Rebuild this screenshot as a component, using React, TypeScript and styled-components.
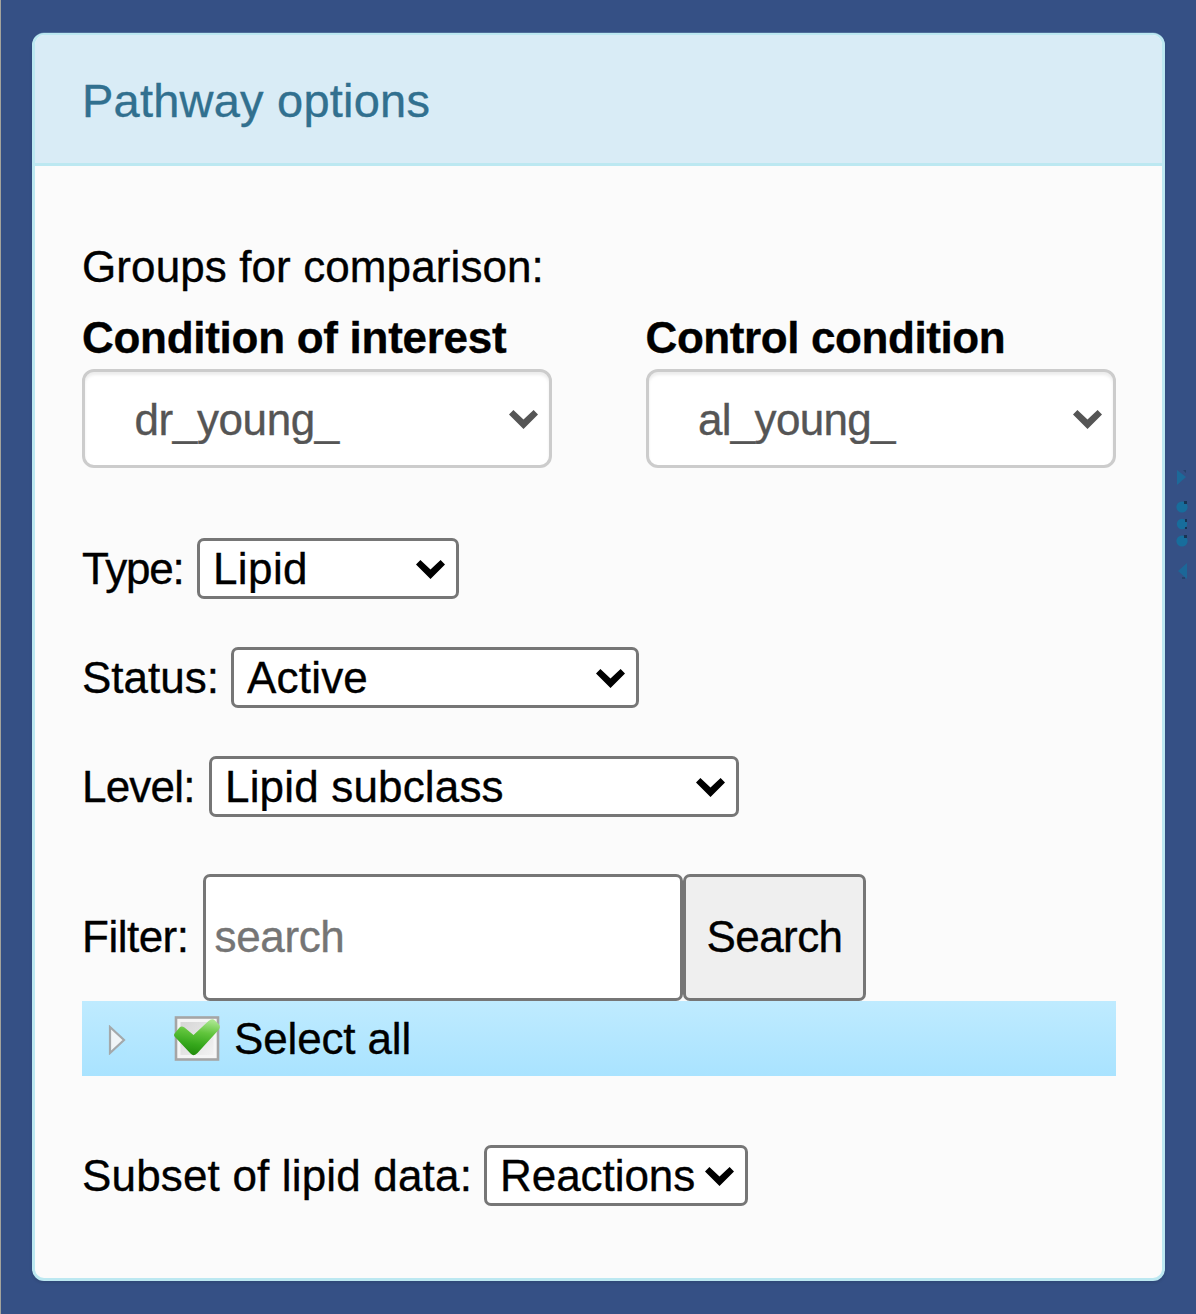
import React from "react";
import styled, { createGlobalStyle } from "styled-components";

const GlobalStyle = createGlobalStyle`
  *, *::before, *::after { box-sizing: border-box; }
  body { margin: 0; background: #355085; }
  body, select, input, button {
    font-family: "Liberation Sans", Arial, Helvetica, sans-serif;
    font-size: 44px;
    color: #000;
    -webkit-text-stroke-width: 0.35px;
  }
`;

const Page = styled.div`
  display: flex;
  align-items: flex-start;
  width: 1196px;
  height: 1314px;
  padding: 33px 0 0 31px;
  border-left: 1px solid #a3a39c;
  background: #355085;
  overflow: hidden;
`;

const Panel = styled.section`
  flex: none;
  width: 1133px;
  height: 1248px;
  border: 3px solid #bce8f1;
  border-top-width: 2px;
  border-radius: 12px;
  background: #fbfbfb;
  box-shadow: 0 2px 3px rgba(0, 0, 0, 0.1), 0 -1px 0 -0.5px rgba(188, 232, 241, 0.4);
  overflow: hidden;
`;

const PanelHeading = styled.header`
  display: flex;
  align-items: center;
  height: 131px;
  padding: 4px 47px 0;
  border-bottom: 3px solid #bce8f1;
  background: #d9ecf6;
`;

const Title = styled.h3<{ $tracking: number }>`
  margin: 0;
  font-size: 47px;
  font-weight: 400;
  line-height: 52px;
  letter-spacing: ${(p) => p.$tracking}px;
  color: #31708f;
`;

const PanelBody = styled.div`
  padding: 69px 47px 0;
`;

const Line = styled.p`
  margin: 0 0 9px;
  line-height: 63px;
`;

const Columns = styled.div`
  display: grid;
  grid-template-columns: 470px 470px;
  justify-content: space-between;
  width: 1033.5px;
  margin-bottom: 70px;
`;

const Column = styled.label`
  display: flex;
  flex-direction: column;
`;

const ColumnLabel = styled.b`
  line-height: 62px;
`;

const Tracked = styled.span<{ $tracking?: number }>`
  white-space: pre;
  letter-spacing: ${(p) => p.$tracking ?? 0}px;
`;

const SelectFrame = styled.span<{ $width: number; $large?: boolean }>`
  display: grid;
  grid-template-columns: 1fr;
  align-items: center;
  flex: none;
  width: ${(p) => p.$width}px;
  height: ${(p) => (p.$large ? 99 : 61)}px;
  color: ${(p) => (p.$large ? "#555" : "#000")};
`;

const NativeSelect = styled.select<{ $large?: boolean; $tracking: number }>`
  appearance: none;
  grid-area: 1 / 1;
  width: 100%;
  height: 100%;
  margin: 0;
  padding: ${(p) => (p.$large ? "2px 0 0 49.5px" : "0 0 0 13px")};
  border: 3px solid ${(p) => (p.$large ? "#ccc" : "#767676")};
  border-radius: ${(p) => (p.$large ? 12 : 7)}px;
  background: #fff;
  box-shadow: ${(p) => (p.$large ? "inset 0 3px 3px rgba(0, 0, 0, 0.075)" : "none")};
  color: inherit;
  letter-spacing: ${(p) => p.$tracking}px;
`;

const ChevronIcon = styled.svg`
  grid-area: 1 / 1;
  justify-self: end;
  margin: 1px 14px 0 0;
  pointer-events: none;
`;

const FieldRow = styled.label<{ $labelWidth: number; $after: number }>`
  display: grid;
  grid-template-columns: ${(p) => p.$labelWidth}px max-content;
  align-items: center;
  margin-bottom: ${(p) => p.$after}px;
`;

const FilterRow = styled.div`
  display: grid;
  grid-template-columns: 121px 480px 183px;
  align-items: center;
  height: 127px;
`;

const FilterLabel = styled.span`
  padding-bottom: 2px;
  letter-spacing: -0.5px;
`;

const SearchInput = styled.input`
  width: 480px;
  height: 127px;
  margin: 0;
  padding: 0 9px 2px 8.5px;
  border: 3px solid #767676;
  border-radius: 7px;
  background: #fff;
  outline: none;
  letter-spacing: -0.35px;
  &::placeholder { color: #757575; opacity: 1; }
`;

const SearchButton = styled.button`
  height: 127px;
  margin: 0;
  padding: 0 0 2px;
  border: 3px solid #767676;
  border-radius: 7px;
  background: #efefef;
  letter-spacing: -0.6px;
`;

const TreeRow = styled.div`
  display: flex;
  align-items: center;
  width: 1033.5px;
  height: 75px;
  padding-left: 26px;
  margin-bottom: 69px;
  background: linear-gradient(#bfebff, #a9e3ff);
`;

const Expander = styled.svg`
  flex: none;
  margin: 2px 45px 0 0;
`;

const CheckIcon = styled.svg`
  flex: none;
  margin-right: 13px;
`;

const Splitter = styled.svg`
  flex: none;
  margin: 432px 0 0 7px;
`;

interface SelectProps {
  value: string;
  width: number;
  large?: boolean;
  tracking?: number;
}

function Select({ value, width, large, tracking = 0 }: SelectProps) {
  return (
    <SelectFrame $width={width} $large={large}>
      <NativeSelect $large={large} $tracking={tracking} defaultValue={value}>
        <option>{value}</option>
      </NativeSelect>
      <ChevronIcon width="29" height="19" viewBox="0 0 29 19">
        <path d="M0 4.600 4.400 0 14.500 9.600 24.600 0 29 4.600 14.500 19Z" fill="currentColor" />
      </ChevronIcon>
    </SelectFrame>
  );
}

const fields = [
  { label: "Type:", labelTracking: -1.2, value: "Lipid", tracking: 0.4, labelWidth: 115, width: 262, after: 48 },
  { label: "Status:", labelTracking: 0, value: "Active", tracking: 0.2, labelWidth: 149, width: 408, after: 48 },
  { label: "Level:", labelTracking: -0.8, value: "Lipid subclass", tracking: 0.17, labelWidth: 127, width: 530, after: 57 },
];

export default function App() {
  return (
    <>
      <GlobalStyle />
      <Page>
        <Panel>
          <PanelHeading>
            <Title $tracking={0.22}>Pathway options</Title>
          </PanelHeading>
          <PanelBody>
            <Line><Tracked $tracking={0.1}>Groups for comparison:</Tracked></Line>
            <Columns>
              <Column>
                <ColumnLabel><Tracked $tracking={-0.28}>Condition of interest</Tracked></ColumnLabel>
                <Select value="dr_young_" width={470} tracking={-0.4} large />
              </Column>
              <Column>
                <ColumnLabel><Tracked $tracking={-0.4}>Control condition</Tracked></ColumnLabel>
                <Select value="al_young_" width={470} tracking={-0.7} large />
              </Column>
            </Columns>
            {fields.map((f) => (
              <FieldRow key={f.label} $labelWidth={f.labelWidth} $after={f.after}>
                <Tracked $tracking={f.labelTracking}>{f.label}</Tracked>
                <Select value={f.value} width={f.width} tracking={f.tracking} />
              </FieldRow>
            ))}
            <FilterRow>
              <FilterLabel>Filter:</FilterLabel>
              <SearchInput placeholder="search" />
              <SearchButton type="button">Search</SearchButton>
            </FilterRow>
            <TreeRow>
              <Expander width="19" height="30" viewBox="0 0 19 30">
                <path d="M2 2 16 15 2 28Z" fill="#f7f7f7" stroke="#a2a2a2" strokeWidth="2.2" opacity=".9" />
              </Expander>
              <CheckIcon width="49" height="47" viewBox="0 0 49 47">
                <defs>
                  <linearGradient id="box" x1="0" y1="0" x2="1" y2="1">
                    <stop offset="0" stopColor="#d6d6d6" />
                    <stop offset="1" stopColor="#f2f2f2" />
                  </linearGradient>
                  <linearGradient id="tick" x1=".6" y1="0" x2=".4" y2="1">
                    <stop offset="0" stopColor="#a9e68e" />
                    <stop offset=".35" stopColor="#62c53d" />
                    <stop offset=".7" stopColor="#36a81c" />
                    <stop offset="1" stopColor="#218c0c" />
                  </linearGradient>
                </defs>
                <rect x="4" y="2.5" width="42" height="42" fill="#f5f5f5" stroke="#a5a5a5" strokeWidth="2.6" />
                <rect x="8.500" y="7" width="33" height="33" fill="url(#box)" />
                <path d="M3 18 7.500 12.500Q9.500 10.500 12.500 12.500L21.500 20 36.500 6Q40 3 43 5.500L47 9.500Q49 12 46.500 15L25.500 38Q22 42 18.500 38.500L3 22Q1 20 3 18Z" fill="url(#tick)" />
              </CheckIcon>
              <Tracked $tracking={-0.15}>Select all</Tracked>
            </TreeRow>
            <FieldRow $labelWidth={402} $after={0}>
              <Tracked $tracking={0.17}>Subset of lipid data:</Tracked>
              <Select value="Reactions" width={264} tracking={-0.05} />
            </FieldRow>
          </PanelBody>
        </Panel>
        <Splitter width="20" height="120" viewBox="0 0 20 120">
          <g fill="#176d9c">
            <path d="M5 5 14 12 5 20Z" opacity=".85" />
            <circle cx="10" cy="42" r="5.6" />
            <circle cx="10" cy="59" r="5.2" />
            <circle cx="10" cy="76" r="5.6" />
            <path d="M15 98 6 106 15 114Z" opacity=".8" />
          </g>
          <g fill="#173453">
            <path d="M12 36h3v3h-3zM13 54h2v3h-2zM13 62h2v2h-2zM12 70h3v3h-3z" />
            <path d="M11 5h3v3zM10 112h3v2h-3z" opacity=".5" />
          </g>
        </Splitter>
      </Page>
    </>
  );
}
